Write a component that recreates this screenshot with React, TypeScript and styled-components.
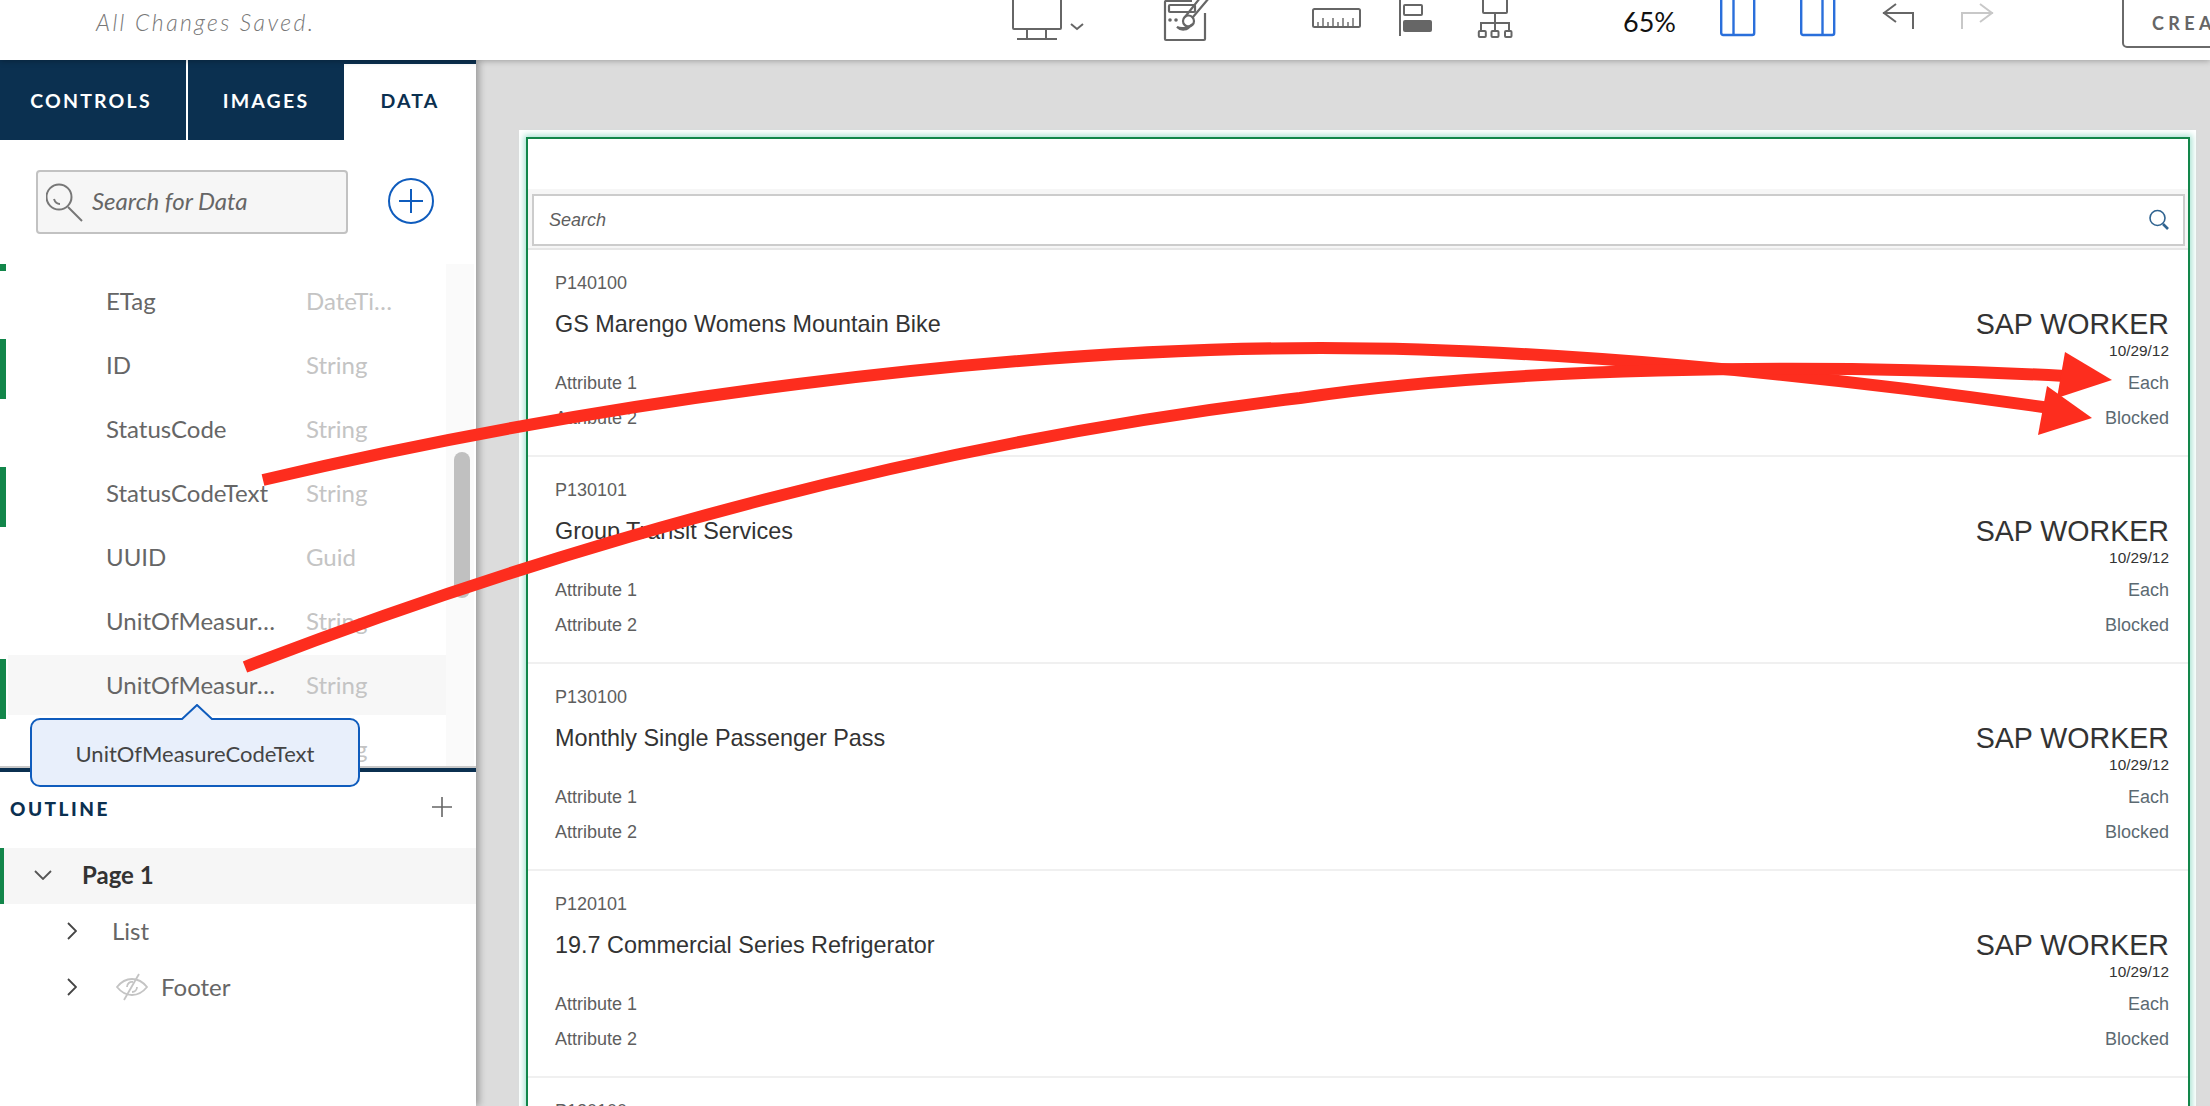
import React from 'react'
import styled, { createGlobalStyle } from 'styled-components'

const Global = createGlobalStyle`
  html, body { margin: 0; padding: 0; height: 100%; background: #dcdcdc; }
  #root { height: 1106px; width: 2210px; overflow: hidden; position: relative; }
  * { box-sizing: border-box; }
`

const lato = `Lato, "Open Sans", sans-serif`
const arial = `"Liberation Sans", Arial, sans-serif`
const navy = '#0b3050'
const green = '#12864a'
const blue = '#0f5cbd'

const Page = styled.div`
  width: 2210px;
  height: 1106px;
  display: flex;
  flex-direction: column;
  overflow: hidden;
  font-family: ${lato};
`

const Header = styled.header`
  height: 60px;
  flex: none;
  background: #fff;
  position: relative;
  z-index: 3;
  box-shadow: 0 1px 6px rgba(0, 0, 0, 0.28);
  display: flex;
  align-items: flex-start;
  overflow: hidden;
`

const Saved = styled.div`
  margin: 8px 0 0 96px;
  width: 884px;
  flex: none;
  font-size: 23px;
  line-height: 28px;
  font-style: italic;
  font-weight: 300;
  letter-spacing: 2.4px;
  color: #777;
`

const Tool = styled.svg<{ $gap: number }>`
  flex: none;
  margin-left: ${p => p.$gap}px;
  display: block;
  color: #666;
  overflow: visible;
`

const Zoom = styled.div`
  flex: none;
  margin: 6px 0 0 111px;
  width: 60px;
  font-size: 27px;
  line-height: 32px;
  color: #111;
`

const CreateButton = styled.div`
  flex: none;
  margin: -10px 0 0 128px;
  width: 160px;
  height: 58px;
  border: 2px solid #6a6a6a;
  border-radius: 5px;
  padding: 19px 0 0 28px;
  font-size: 18px;
  line-height: 24px;
  font-weight: 700;
  letter-spacing: 4.4px;
  color: #666;
  white-space: nowrap;
`

const Body = styled.div`
  flex: 1;
  display: flex;
  min-height: 0;
`

const Sidebar = styled.aside`
  width: 476px;
  flex: none;
  background: #fff;
  position: relative;
  z-index: 2;
  box-shadow: 3px 0 7px rgba(0, 0, 0, 0.3);
  display: flex;
  flex-direction: column;
`

const Tabs = styled.div`
  height: 80px;
  flex: none;
  display: flex;
  background: ${navy};
`

const Tab = styled.div<{ $width: number; $active?: boolean }>`
  width: ${p => p.$width}px;
  margin-top: ${p => (p.$active ? 4 : 0)}px;
  background: ${p => (p.$active ? '#fff' : navy)};
  color: ${p => (p.$active ? navy : '#fff')};
  border-left: ${p => (p.$width === 158 ? '2px solid #fff' : 'none')};
  display: flex;
  align-items: center;
  justify-content: center;
  padding-bottom: ${p => (p.$active ? 4 : 0)}px;
  padding-right: ${p => (p.$width === 186 ? 4 : 0)}px;
  font-size: 19.5px;
  font-weight: 700;
  letter-spacing: 2.2px;
`

const SearchBlock = styled.div`
  height: 124px;
  flex: none;
  display: flex;
  padding: 30px 0 0 36px;
`

const SearchField = styled.div`
  width: 312px;
  height: 64px;
  background: #f6f6f6;
  border: 2px solid #c2c2c2;
  border-radius: 4px;
  display: flex;
  align-items: center;
  gap: 8px;
  padding-left: 8px;
  font-size: 24px;
  font-style: italic;
  color: #666;
`

const SearchLabel = styled.span`
  margin-top: -4px;
`

const AddCircle = styled.svg`
  margin: 8px 0 0 40px;
  flex: none;
`

const DataPanel = styled.div`
  height: 502px;
  flex: none;
  display: flex;
  overflow: hidden;
`

const FieldList = styled.div`
  width: 446px;
  flex: none;
  display: flex;
  flex-direction: column;
`

const ClippedBar = styled.div`
  width: 6px;
  height: 7px;
  flex: none;
  background: ${green};
`

const FieldRow = styled.div<{ $marked?: boolean; $hover?: boolean }>`
  height: 60px;
  flex: none;
  margin: 0 0 4px 8px;
  padding: 0 0 2px 98px;
  display: flex;
  align-items: center;
  position: relative;
  background: ${p => (p.$hover ? '#f7f7f7' : 'transparent')};
  font-size: 24px;

  &::before {
    content: '';
    display: ${p => (p.$marked ? 'block' : 'none')};
    position: absolute;
    left: -8px;
    top: 4px;
    width: 6px;
    height: 60px;
    background: ${green};
  }
`

const FieldName = styled.span`
  width: 200px;
  flex: none;
  color: #666;
  white-space: nowrap;
`

const Truncated = styled.span`
  display: block;
  width: 170px;
  overflow: hidden;
  text-overflow: ellipsis;
`

const FieldType = styled.span`
  width: 88px;
  flex: none;
  color: #c4c4c4;
  white-space: nowrap;
  overflow: hidden;
  text-overflow: ellipsis;
`

const Track = styled.div`
  width: 28px;
  flex: none;
  background: #fafafa;
  padding: 188px 0 0 8px;
`

const Thumb = styled.div`
  width: 16px;
  height: 146px;
  border-radius: 8px;
  background: #c0c0c0;
`

const Tooltip = styled.div`
  position: absolute;
  left: 30px;
  top: 658px;
  width: 330px;
  height: 69px;
  padding-top: 2px;
  background: #e8effb;
  border: 2px solid ${blue};
  border-radius: 10px;
  display: flex;
  align-items: center;
  justify-content: center;
  font-size: 22px;
  color: #444;
  z-index: 2;
`

const TooltipTip = styled.svg`
  position: absolute;
  left: 148px;
  top: -16px;
`

const OutlineRule = styled.div`
  height: 6px;
  flex: none;
  border-top: 2px solid #c8c8c8;
  background: ${navy};
  background-clip: padding-box;
`

const OutlineHead = styled.div`
  height: 76px;
  flex: none;
  display: flex;
  align-items: flex-start;
  justify-content: space-between;
  padding: 25px 24px 0 10px;
  font-size: 19px;
  line-height: 24px;
  font-weight: 900;
  letter-spacing: 2.5px;
  color: ${navy};
`

const TreeRow = styled.div<{ $selected?: boolean; $depth: number }>`
  height: 56px;
  flex: none;
  display: flex;
  align-items: center;
  padding: 0 0 3px ${p => (p.$depth === 0 ? 30 : 67)}px;
  background: ${p => (p.$selected ? '#f6f6f6' : 'transparent')};
  border-left: ${p => (p.$selected ? `4px solid ${green}` : 'none')};
  font-size: 24px;
  font-weight: ${p => (p.$selected ? 700 : 400)};
  color: ${p => (p.$selected ? '#333' : '#666')};
`

const TreeLabel = styled.span<{ $gap: number }>`
  margin-left: ${p => p.$gap}px;
  display: flex;
`

const Canvas = styled.main`
  flex: 1;
  min-width: 0;
  padding: 70px 14px 0 43px;
`

const Frame = styled.div`
  height: 1000px;
  background: #fff;
  padding: 7px 6px 0 7px;
`

const Selection = styled.div`
  height: 100%;
  border: 2px solid ${green};
  box-shadow: 0 0 6px 2px #a8e2d2;
  padding-top: 50px;
  font-family: ${arial};
`

const SearchStrip = styled.div`
  height: 61px;
  background: #f6f6f6;
  border-bottom: 2px solid #e6e6e6;
  padding: 5px 3px 0 4px;
`

const SearchInput = styled.div`
  height: 52px;
  background: #fff;
  border: 2px solid #cccccc;
  display: flex;
  align-items: center;
  justify-content: space-between;
  padding: 0 14px 0 15px;
  font-size: 18px;
  font-style: italic;
  color: #5e5e5e;
`

const Item = styled.div`
  height: 207px;
  padding: 21px 19px 0 27px;
  border-bottom: 2px solid #f0f0f0;
`

const ItemId = styled.div`
  font-size: 18px;
  line-height: 24px;
  color: #5e5e5e;
`

const TitleRow = styled.div`
  margin-top: 14px;
  display: flex;
  justify-content: space-between;
  align-items: center;
  color: #333;
`

const ItemTitle = styled.div`
  font-size: 23.4px;
  line-height: 30px;
`

const Worker = styled.div`
  font-size: 28.6px;
  line-height: 30px;
`

const ItemDate = styled.div`
  margin-top: 3px;
  text-align: right;
  font-size: 15.4px;
  line-height: 18px;
  color: #333;
`

const MetaRow = styled.div<{ $first?: boolean }>`
  margin-top: ${p => (p.$first ? 14 : 17)}px;
  display: flex;
  justify-content: space-between;
  font-size: 18px;
  line-height: 18px;
  color: #5e5e5e;
`

const MetaValue = styled.span`
  color: #5c6a72;
`

const Arrows = styled.svg`
  position: absolute;
  left: 0;
  top: 0;
  z-index: 5;
  pointer-events: none;
`

const fields = [
  { name: 'ETag', type: 'DateTime' },
  { name: 'ID', type: 'String', marked: true },
  { name: 'StatusCode', type: 'String' },
  { name: 'StatusCodeText', type: 'String', marked: true },
  { name: 'UUID', type: 'Guid' },
  { name: 'UnitOfMeasureCode', type: 'String' },
  { name: 'UnitOfMeasureCodeText', type: 'String', marked: true, hover: true },
  { name: 'UpdatedBy', type: 'String' },
]

const products = [
  { id: 'P140100', title: 'GS Marengo Womens Mountain Bike' },
  { id: 'P130101', title: 'Group Transit Services' },
  { id: 'P130100', title: 'Monthly Single Passenger Pass' },
  { id: 'P120101', title: '19.7 Commercial Series Refrigerator' },
  { id: 'P120100', title: '' },
]

const Chevron = ({ down }: { down?: boolean }) =>
  down ? (
    <svg width="18" height="10" viewBox="0 0 18 10" fill="none" stroke="#555" strokeWidth="1.8">
      <path d="M1 1l8 8 8-8" />
    </svg>
  ) : (
    <svg width="10" height="18" viewBox="0 0 10 18" fill="none" stroke="#444" strokeWidth="1.8">
      <path d="M1 1l8 8-8 8" />
    </svg>
  )

const App = () => (
  <Page>
    <Global />
    <Header>
      <Saved>All Changes Saved.</Saved>
      {/* monitor */}
      <Tool $gap={32} width="72" height="42" viewBox="0 0 72 42" fill="none" stroke="currentColor" strokeWidth="2">
        <path d="M1 -2v30a1 1 0 0 0 1 1h46a1 1 0 0 0 1-1v-30" />
        <path d="M15 29v9M34 29v9M5 39h40" />
        <path d="M59 24l6 5 6-5" />
      </Tool>
      {/* page with brush */}
      <Tool $gap={80} width="44" height="44" viewBox="0 0 44 44" fill="none" stroke="currentColor" strokeWidth="2.2">
        <path d="M28 1H2a1 1 0 0 0-1 1v37a1 1 0 0 0 1 1h38a1 1 0 0 0 1-1V13" />
        <rect x="5" y="5" width="26" height="7" rx="1" />
        <circle cx="24.5" cy="21" r="5.5" />
        <path d="M21 17L36 -2M29 17L45 -2" />
        <path d="M13 27c4 2 10 1 13-1-2 4-9 5-13 1z" fill="currentColor" />
        <circle cx="6" cy="20" r="1.8" fill="currentColor" stroke="none" />
        <circle cx="12" cy="20" r="1.8" fill="currentColor" stroke="none" />
      </Tool>
      {/* ruler */}
      <Tool $gap={104} width="50" height="30" viewBox="0 0 50 30" fill="none" stroke="currentColor" strokeWidth="2">
        <rect x="1" y="9" width="47" height="18" rx="1.5" />
        <path d="M6 26v-4M11 26v-8M16 26v-4M21 26v-8M26 26v-4M31 26v-8M36 26v-4M41 26v-8" strokeWidth="1.4" />
      </Tool>
      {/* align left */}
      <Tool $gap={37} width="34" height="38" viewBox="0 0 34 38" fill="none" stroke="currentColor" strokeWidth="2">
        <path d="M1 0v36" />
        <rect x="5" y="5" width="18" height="10" rx="1" />
        <rect x="4" y="20" width="29" height="12" rx="2" fill="currentColor" stroke="none" />
      </Tool>
      {/* hierarchy */}
      <Tool $gap={45} width="34" height="40" viewBox="0 0 34 40" fill="none" stroke="currentColor" strokeWidth="2">
        <rect x="5" y="-4" width="24" height="17" rx="1" />
        <path d="M17 13v10M3 31v-8h28v8M17 23v8" />
        <rect x="0.8" y="31" width="7" height="6" rx="1" />
        <rect x="13.5" y="31" width="7" height="6" rx="1" />
        <rect x="27" y="31" width="6.5" height="6" rx="1" />
      </Tool>
      <Zoom>65%</Zoom>
      {/* left panel toggle */}
      <Tool $gap={37} width="36" height="38" viewBox="0 0 36 38" fill="none" stroke="#2a6fdb" strokeWidth="2.4">
        <rect x="1.2" y="-4" width="33" height="39" rx="2" />
        <path d="M13.5 0v35" />
      </Tool>
      {/* right panel toggle */}
      <Tool $gap={44} width="36" height="38" viewBox="0 0 36 38" fill="none" stroke="#2a6fdb" strokeWidth="2.4">
        <rect x="1.2" y="-4" width="33" height="39" rx="2" />
        <path d="M22.5 0v35" />
      </Tool>
      {/* undo */}
      <Tool $gap={46} width="34" height="32" viewBox="0 0 34 32" fill="none" stroke="#666" strokeWidth="2">
        <path d="M1 13h30v16" />
        <path d="M14 4L2 13l12 9" />
      </Tool>
      {/* redo */}
      <Tool $gap={44} width="34" height="32" viewBox="0 0 34 32" fill="none" stroke="#c8c8c8" strokeWidth="2">
        <path d="M33 13H2v16" />
        <path d="M20 4l12 9-12 9" />
      </Tool>
      <CreateButton>CREATE</CreateButton>
    </Header>
    <Body>
      <Sidebar>
        <Tabs>
          <Tab $width={186}>CONTROLS</Tab>
          <Tab $width={158}>IMAGES</Tab>
          <Tab $width={132} $active>DATA</Tab>
        </Tabs>
        <SearchBlock>
          <SearchField>
            <svg width="38" height="40" viewBox="0 0 38 40" fill="none" stroke="#777" strokeWidth="2">
              <circle cx="13" cy="15" r="12.5" />
              <path d="M22 25l14 14" />
              <path d="M8 17c1 3 3 5 6 5" />
            </svg>
            <SearchLabel>Search for Data</SearchLabel>
          </SearchField>
          <AddCircle width="46" height="46" viewBox="0 0 46 46" fill="none" stroke={blue} strokeWidth="2">
            <circle cx="23" cy="23" r="22" />
            <path d="M23 11v24M11 23h24" />
          </AddCircle>
        </SearchBlock>
        <DataPanel>
          <FieldList>
            <ClippedBar />
            {fields.map(f => (
              <FieldRow key={f.name} $marked={f.marked} $hover={f.hover}>
                <FieldName>
                  <Truncated>{f.name}</Truncated>
                </FieldName>
                <FieldType>{f.type}</FieldType>
              </FieldRow>
            ))}
          </FieldList>
          <Track>
            <Thumb />
          </Track>
        </DataPanel>
        <Tooltip>
          <TooltipTip width="34" height="16" viewBox="0 0 34 16">
            <path d="M1 16L17 1l16 15" fill="#e8effb" stroke={blue} strokeWidth="2" />
          </TooltipTip>
          UnitOfMeasureCodeText
        </Tooltip>
        <OutlineRule />
        <OutlineHead>
          OUTLINE
          <svg width="20" height="20" viewBox="0 0 20 20" fill="none" stroke="#666" strokeWidth="1.6">
            <path d="M10 0v20M0 10h20" />
          </svg>
        </OutlineHead>
        <TreeRow $selected $depth={0}>
          <Chevron down />
          <TreeLabel $gap={30}>Page 1</TreeLabel>
        </TreeRow>
        <TreeRow $depth={1}>
          <Chevron />
          <TreeLabel $gap={35}>List</TreeLabel>
        </TreeRow>
        <TreeRow $depth={1}>
          <Chevron />
          <TreeLabel $gap={39}>
            <svg width="32" height="28" viewBox="0 0 32 28" fill="none" stroke="#c4c4c4" strokeWidth="1.8">
              <path d="M1 14c4-5 9-8 15-8s11 3 15 8c-4 5-9 8-15 8s-11-3-15-8z" />
              <path d="M11 14a5 5 0 0 1 6-5M21 14a5 5 0 0 1-5 5" />
              <path d="M23 1L8 27" />
            </svg>
          </TreeLabel>
          <TreeLabel $gap={13}>Footer</TreeLabel>
        </TreeRow>
      </Sidebar>
      <Canvas>
        <Frame>
          <Selection>
            <SearchStrip>
              <SearchInput>
                Search
                <svg width="20" height="22" viewBox="0 0 20 22" fill="none" stroke="#2f6390" strokeWidth="1.6">
                  <circle cx="8.5" cy="9" r="7.5" />
                  <path d="M14 15l5 5" strokeWidth="2.6" />
                </svg>
              </SearchInput>
            </SearchStrip>
            {products.map(p => (
              <Item key={p.id}>
                <ItemId>{p.id}</ItemId>
                <TitleRow>
                  <ItemTitle>{p.title}</ItemTitle>
                  <Worker>SAP WORKER</Worker>
                </TitleRow>
                <ItemDate>10/29/12</ItemDate>
                <MetaRow $first>
                  <span>Attribute 1</span>
                  <MetaValue>Each</MetaValue>
                </MetaRow>
                <MetaRow>
                  <span>Attribute 2</span>
                  <MetaValue>Blocked</MetaValue>
                </MetaRow>
              </Item>
            ))}
          </Selection>
        </Frame>
      </Canvas>
    </Body>
    <Arrows width="2210" height="1106" viewBox="0 0 2210 1106" fill="none" stroke="#fd2d1e" strokeWidth="12">
      <path d="M263 480C600 400 1000 348 1321 348C1550 348 1820 375 2050 408" />
      <path d="M245 667C600 530 950 440 1300 398C1500 368 1800 362 2065 376" />
      <path d="M2047 386L2092 418L2038 435Z" fill="#fd2d1e" stroke="none" />
      <path d="M2065 352L2112 380L2057 398Z" fill="#fd2d1e" stroke="none" />
    </Arrows>
  </Page>
)

export default App
